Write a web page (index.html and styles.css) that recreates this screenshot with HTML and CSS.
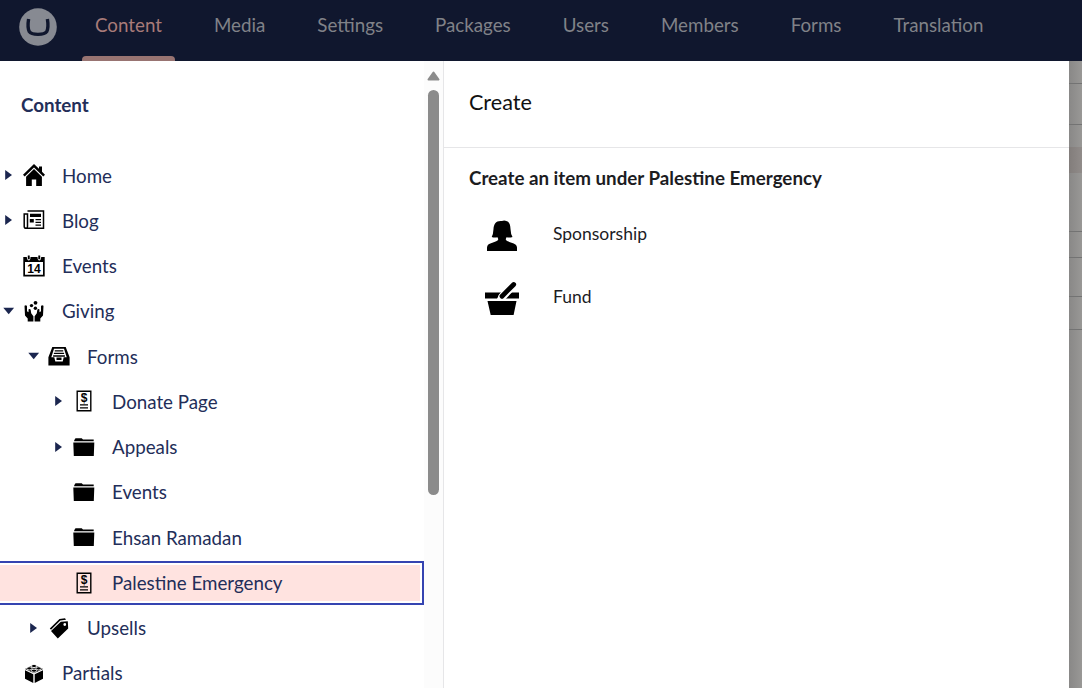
FILE: index.html
```html
<!DOCTYPE html>
<html lang="en">
<head>
<meta charset="utf-8">
<title>Content</title>
<link rel="stylesheet" href="styles.css">
</head>
<body>
<svg class="defs" width="0" height="0">
  <symbol id="right" viewBox="0 0 17 16"><path d="M5.200 3v10l6.800-5z"/></symbol>
  <symbol id="down" viewBox="0 0 17 16"><path d="M3.300 4.800h10.800L8.700 11.300z"/></symbol>
  <symbol id="folder" viewBox="0 0 22 22"><path d="M1.200 4.300 2.500 2.200H8.700L10 3.500H20.700V5.200H1.200zM.3 6.500H21.300L20.800 20H.8z"/></symbol>
</svg>
<div class="app">
  <header class="topbar">
    <svg class="logo" viewBox="0 0 38 38"><circle cx="19" cy="19" r="18.800" fill="#878a92"/><path d="M9.600 11Q8.200 19.500 10.300 23.700 12 26.400 19 26.400T27.700 23.700Q29.800 19.500 28.400 11" fill="none" stroke="#10172e" stroke-width="3.400"/></svg>
    <nav class="sections">
      <a class="section active">Content</a><a class="section">Media</a><a class="section">Settings</a><a class="section">Packages</a><a class="section">Users</a><a class="section">Members</a><a class="section">Forms</a><a class="section">Translation</a>
    </nav>
  </header>
  <div class="main">
    <aside class="sidebar">
      <h2 class="tree-title">Content</h2>
      <ul class="tree">
        <li class="node"><svg class="arrow"><use href="#right"/></svg><svg class="icon" viewBox="0 0 22 22"><path d="M11 0 16 4.800V2.500h3v5.200L22 10.800 20.300 12.500 11 3.500 1.700 12.500 0 10.800z"/><path d="M11 5 18.900 12.700V22H13.200V15.500H8.800V22H3.100V12.700z"/></svg><span>Home</span></li>
        <li class="node"><svg class="arrow"><use href="#right"/></svg><svg class="icon" viewBox="0 0 22 22"><path fill="none" stroke="#000" stroke-width="1.500" d="M4.500 2h16v17.300H3.200Q1.200 19.300 1.200 17.500V5H4.500V17.500Q4.500 19.300 3 19.300"/><path d="M7 4.800h11v3.200H7zM6.800 10h4v3.400H6.800zM12.500 10H18v1.300h-5.500zM12.500 12.700H18v1.300h-5.500zM12.500 15.400H18v1.300h-5.500z"/></svg><span>Blog</span></li>
        <li class="node"><i class="arrow"></i><svg class="icon" viewBox="0 0 22 22"><path fill-rule="evenodd" d="M.3 2H3.800Q4 5.400 5.800 5.400 7.500 5.400 7.500 2H14.500Q14.600 5.400 16.300 5.400 18 5.400 18.200 2H21.700V21.500H.3zM2 7V19.800H20V7z"/><path d="M4.800.5h1.900v3.700H4.800zM15.300.5h1.900v3.700h-1.900z"/><text x="11" y="17.700" text-anchor="middle" class="day">14</text></svg><span>Events</span></li>
        <li class="node"><svg class="arrow"><use href="#down"/></svg><svg class="icon" viewBox="0 0 22 22"><circle cx="12.500" cy="2.800" r="1.900"/><circle cx="8.500" cy="5.600" r="1.700"/><circle cx="12.400" cy="8.200" r="1.700"/><path d="M1.500 5.800Q3.300 4.400 4 6.300V11.300L5.500 12.300 5.600 9.300Q7.300 8.300 7.700 10.100L8.200 13.300 10.400 16.300V21.500H4.700V18.500L2 15.500zM20.500 5.800Q18.700 4.400 18 6.300V11.300L16.500 12.300 16.400 9.300Q14.700 8.300 14.300 10.100L13.800 13.300 11.600 16.300V21.500H17.300V18.500L20 15.500z"/></svg><span>Giving</span></li>
        <li class="node level-1"><svg class="arrow"><use href="#down"/></svg><svg class="icon" viewBox="0 0 22 22"><path fill-rule="evenodd" d="M4.300 2h13.400L21.600 12.200V20.500H.4V12.200zM6 3.700 3.300 12.200H6.300L7.300 16.500H14.700L15.700 12.200H18.700L16 3.700z"/><path d="M6.800 5.200h8.400v1.300H6.800zM5.900 7.700h10.200V9H5.900zM5.100 10.200h11.800v1.500H5.100zM8.500 12.600h5v2.500H8.500z"/></svg><span>Forms</span></li>
        <li class="node level-2"><svg class="arrow"><use href="#right"/></svg><svg class="icon" viewBox="0 0 22 22"><path fill="none" stroke="#000" stroke-width="1.400" d="M4.200 1.200h13.600v19.600H4.200z"/><path d="M7 14.300h8v1.300H7zM7 17.200h8v1.300H7z"/><text x="11" y="12.300" text-anchor="middle" class="dollar">$</text></svg><span>Donate Page</span></li>
        <li class="node level-2"><svg class="arrow"><use href="#right"/></svg><svg class="icon"><use href="#folder"/></svg><span>Appeals</span></li>
        <li class="node level-2"><i class="arrow"></i><svg class="icon"><use href="#folder"/></svg><span>Events</span></li>
        <li class="node level-2"><i class="arrow"></i><svg class="icon"><use href="#folder"/></svg><span>Ehsan Ramadan</span></li>
        <li class="node level-2 selected"><i class="arrow"></i><svg class="icon" viewBox="0 0 22 22"><path fill="none" stroke="#000" stroke-width="1.400" d="M4.200 1.200h13.600v19.600H4.200z"/><path d="M7 14.300h8v1.300H7zM7 17.200h8v1.300H7z"/><text x="11" y="12.300" text-anchor="middle" class="dollar">$</text></svg><span>Palestine Emergency</span></li>
        <li class="node level-1"><svg class="arrow"><use href="#right"/></svg><svg class="icon" viewBox="0 0 22 22"><path d="M1.800 11.500 11.500 1.900 17 1.200 18 2.800 12.300 3.500 3 12.700z"/><path fill-rule="evenodd" d="M3 14 12.800 4.700 19.800 4.200 20.200 11.600 9.800 21.500zM16.700 6.100a1.400 1.400 0 1 0 .1 2.800 1.400 1.400 0 0 0-.1-2.800z"/></svg><span>Upsells</span></li>
        <li class="node"><i class="arrow"></i><svg class="icon" viewBox="0 0 22 22"><path d="M2 8.300 10.300 12.200V20.900L2 16.800zM20 8.300 11.700 12.200V20.900L20 16.800z"/><path d="M11 2.500 20 7 11 11.300 2 7z"/><g fill="#000" stroke="#fff" stroke-width=".9"><ellipse cx="11" cy="4" rx="2.600" ry="1.600"/><ellipse cx="6.400" cy="6.400" rx="2.600" ry="1.600"/><ellipse cx="15.600" cy="6.400" rx="2.600" ry="1.600"/><ellipse cx="11" cy="8.700" rx="2.600" ry="1.600"/></g></svg><span>Partials</span></li>
      </ul>
    </aside>
    <div class="scrollbar">
      <svg class="scroll-up" viewBox="0 0 13 10"><path d="M6.500 1.500 11.500 8.500H1.500z" fill="#8b8b8b" stroke="#8b8b8b" stroke-width="2" stroke-linejoin="round"/></svg>
      <div class="thumb"></div>
    </div>
    <section class="panel">
      <h1 class="panel-title">Create</h1>
      <div class="panel-body">
        <h2 class="panel-subtitle">Create an item under Palestine Emergency</h2>
        <div class="option"><svg class="option-icon" viewBox="0 0 36 36"><path d="M18 3Q20 2 23 3.200C25.500 4.200 26.300 7 26.500 11Q26.700 16 28.500 19Q25.500 20 22.500 19.200L21.700 21.300C22.500 25 33 24 33 29.500V33H3V29.500C3 24 13.500 25 14.300 21.300L13.500 19.200Q10.500 20 7.700 19Q9.300 16 9.500 11C9.800 6 12 2.300 18 3z"/></svg><span>Sponsorship</span></div>
        <div class="option"><svg class="option-icon" viewBox="0 0 36 36"><path d="M1 11.500H17L13 17.500H1zM26 11.500H35V17.500H20.500zM3.500 20H32.500L29.600 34H6.700z"/><path d="M18.300 15.700 29.500 4" stroke="#fff" stroke-width="8" stroke-linecap="round"/><path d="M18 15.200 29.700 3.500" stroke="#000" stroke-width="4.800" stroke-linecap="round"/></svg><span>Fund</span></div>
      </div>
    </section>
    <div class="backdrop">
      <i class="line l1"></i><i class="line l2"></i><i class="line l3"></i><i class="line l4"></i><i class="line l5"></i><i class="line l6"></i><i class="line l7"></i>
    </div>
  </div>
</div>
</body>
</html>
```
FILE: styles.css
```css
* { box-sizing: border-box; }
body { margin: 0; font-family: Lato, "Open Sans", sans-serif; font-size: 18.75px; color: #232e59; background: #fff; }
.defs { position: absolute; }
.app { display: flex; flex-direction: column; width: 1082px; height: 688px; overflow: hidden; }
.topbar { display: flex; flex: none; height: 61px; padding-left: 18.500px; background: #10172e; }
.logo { flex: none; width: 38px; height: 38px; margin-top: 7.500px; }
.sections { display: flex; gap: 26px; margin-left: 25.500px; }
.section { display: flex; flex-direction: column; padding: 13px 13px 0; line-height: 23px; color: #808288; white-space: nowrap; }
.section.active { color: #a87b79; }
.section.active::after { content: ""; height: 5px; margin: auto -13px 0; border-radius: 4px 4px 0 0; background: #987472; }
.main { display: flex; flex: 1; min-height: 0; }
.sidebar { flex: none; width: 424px; overflow: hidden; }
.tree-title { margin: 32px 0 35.400px 21px; font-size: 18.75px; font-weight: 700; line-height: 24px; }
.tree { margin: 0; padding: 0; list-style: none; }
.node { display: flex; align-items: center; height: 45.25px; white-space: nowrap; }
.level-1 { padding-left: 25px; }
.level-2 { padding-left: 50px; }
.selected { height: 44px; margin: .9px 0 .35px; border: solid #3544b1; border-width: 2px 2px 2px 0; background: #ffe3e0; box-shadow: inset -2px 2px #fff, inset 0 -2px #fff; }
.arrow { flex: none; width: 17px; height: 16px; fill: #1b264f; }
.icon { flex: none; width: 22px; height: 22px; margin: 0 17.500px 0 5.500px; fill: #000; }
.day, .dollar { font: 700 12px "Liberation Sans", sans-serif; }
.scrollbar { flex: none; width: 19px; background: #fcfcfc; }
.scroll-up { display: block; width: 13px; height: 10px; margin: 10px 0 0 3px; }
.thumb { width: 11px; height: 405px; margin: 9px 0 0 4px; border-radius: 6px; background: #8b8b8b; }
.panel { flex: none; width: 626px; border-left: 1px solid #e6e6e8; color: #1c1c1f; }
.panel-title { height: 87px; margin: 0; padding: 27px 25px 0; border-bottom: 1px solid #e6e6e8; font-size: 21.600px; font-weight: 400; line-height: 28px; color: #111; }
.panel-body { padding: 18px 25px; }
.panel-subtitle { margin: 0 0 14px; font-size: 18.75px; font-weight: 700; line-height: 24px; }
.option { display: flex; height: 63px; padding: 14px 0 0 15px; gap: 33px; font-size: 17.500px; line-height: 24px; }
.option span { padding-top: 4px; }
.option-icon { flex: none; width: 36px; height: 36px; }
.backdrop { flex: 1; background: linear-gradient(90deg, #898887, #999896); }
.line { display: block; height: 1px; background: #737373; }
.l1 { margin-top: 22px; }
.l2 { margin-top: 40px; }
.l3 { height: 26px; margin-top: 22px; background: linear-gradient(90deg, #827d7b, #918c8a); }
.l4 { margin-top: 58px; }
.l5 { margin-top: 25px; }
.l6 { margin-top: 38px; }
.l7 { margin-top: 32px; }
```
